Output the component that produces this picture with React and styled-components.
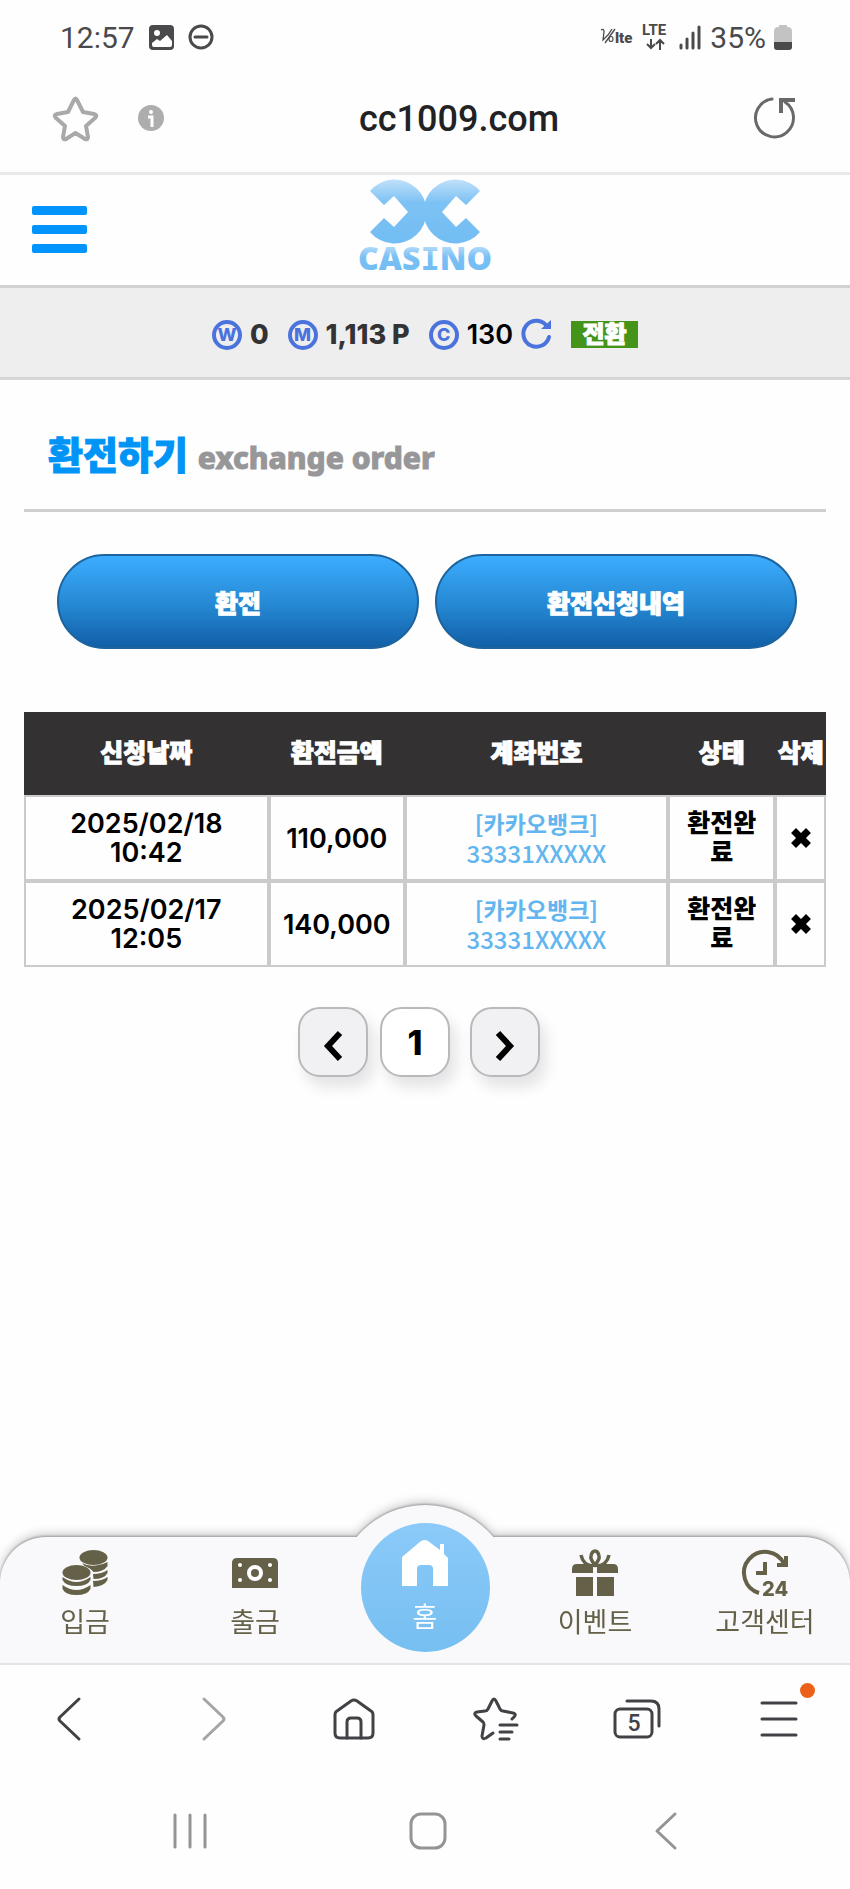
import React from "react";
import styled, { createGlobalStyle, css } from "styled-components";

const GlobalStyle = createGlobalStyle`
    * {
        box-sizing: border-box;
    }

    body {
        margin: 0;
        background: #fefefe;
        color: #000;
        font-family: Inter, "Noto Sans CJK KR", sans-serif;
    }

    button {
        padding: 0;
        border: 0;
        background: none;
        font: inherit;
        color: inherit;
        cursor: pointer;
    }

    a {
        color: inherit;
        text-decoration: none;
    }

    svg {
        display: block;
        flex: none;
        overflow: visible;
    }
`;

const Screen = styled.div`
    min-height: 100vh;
    display: flex;
    flex-direction: column;
`;

const StatusBar = styled.div`
    height: 74px;
    padding: 0 58px 0 60px;
    display: flex;
    align-items: center;
    justify-content: space-between;
    font-family: Roboto, sans-serif;
    font-size: 30px;
    color: #4a4a4c;
`;

const StatusGroup = styled.div`
    display: flex;
    align-items: center;
    gap: ${({ gap }) => gap}px;
`;

const AddressBar = styled.div`
    height: 101px;
    padding: 0 54px 10px 53px;
    display: flex;
    align-items: center;
    border-bottom: 3px solid #e9e9ea;
`;

const InfoButton = styled.button`
    margin-left: 40px;
`;

const Address = styled.div`
    flex: 1;
    padding-top: 2px;
    text-align: center;
    font-family: Roboto, sans-serif;
    font-weight: 500;
    font-size: 36px;
    color: #222224;
`;

const Header = styled.header`
    height: 110px;
    padding: 0 32px 2px;
    display: grid;
    grid-template-columns: 1fr auto 1fr;
    align-items: center;
`;

const LogoLink = styled.a`
    align-self: start;
`;

const MenuButton = styled.button`
    width: 55px;
    display: grid;
    gap: 10px;
`;

const MenuLine = styled.span`
    height: 9px;
    border-radius: 2px;
    background: #0094fc;
`;

const WalletBar = styled.div`
    height: 95px;
    padding-top: 4px;
    display: flex;
    align-items: center;
    justify-content: center;
    gap: 19px;
    background: #eeeeef;
    border-top: 3px solid #d2d2d3;
    border-bottom: 3px solid #d6d6d7;
`;

const Wallet = styled.div`
    display: flex;
    align-items: center;
    gap: 8px;
    font-size: 27px;
    line-height: 30px;
    ${({ strong }) => css`
        font-weight: ${strong ? 800 : 600};
        color: ${strong ? "#333335" : "#000"};
    `}
`;

const Coin = styled.span`
    width: 30px;
    height: 30px;
    border: 4px solid #4b73dd;
    border-radius: 50%;
    display: grid;
    place-items: center;
    font-weight: 800;
    font-size: 18px;
    line-height: 22px;
    color: #4b73dd;
`;

const ConvertButton = styled.button`
    width: 67px;
    height: 27px;
    background: #44941a;
    color: #fff;
    font-weight: 900;
    font-size: 24px;
    line-height: 27px;
    -webkit-text-stroke: 1px #fff;
`;

const Main = styled.main`
    flex: 1;
    padding: 51px 24px 40px;
`;

const Title = styled.h1`
    margin: 0 0 42px;
    padding: 0 24px 27px;
    display: flex;
    align-items: baseline;
    gap: 10px;
    border-bottom: 3px solid #cfcfd1;
    line-height: 48px;
    font-weight: 900;
    font-size: 38px;
    color: #0094f6;
    -webkit-text-stroke: 1px currentColor;
`;

const Subtitle = styled.small`
    font-family: "Noto Sans", sans-serif;
    font-weight: 800;
    font-size: 30px;
    color: #979799;
`;

const Actions = styled.div`
    padding: 0 29px 0 33px;
    display: grid;
    grid-template-columns: 1fr 1fr;
    gap: 16px;
`;

const ActionButton = styled.button`
    height: 95px;
    border: 2px solid #1d639d;
    border-radius: 48px;
    background: linear-gradient(#3cadff, #2587d2 55%, #115fa7);
    color: #fff;
    font-weight: 900;
    font-size: 25px;
    -webkit-text-stroke: 1px #fff;
`;

const Table = styled.table`
    width: 100%;
    margin: 63px 0 40px;
    table-layout: fixed;
    border-collapse: separate;
    border-spacing: 0;
    text-align: center;
    font-size: 27px;
    line-height: 29px;
    font-weight: 600;
`;

const Col = styled.col`
    width: ${({ share }) => share}%;
`;

const HeadCell = styled.th`
    height: 83px;
    padding: 0;
    background: #343133;
    color: #fff;
    font-weight: 900;
    font-size: 25px;
    white-space: nowrap;
    -webkit-text-stroke: 1px #fff;
`;

const Cell = styled.td`
    height: 86px;
    padding: 0 4px;
    border: 2px solid #cccacd;
`;

const DateCell = styled(Cell)`
    padding: 0 40px;
`;

const StatusCell = styled(Cell)`
    padding: 0 16px;
    font-weight: 900;
    font-size: 25px;
    word-break: break-all;
`;

const Account = styled.div`
    font-family: "Noto Sans CJK KR", sans-serif;
    font-size: 24px;
    line-height: 29px;
    font-weight: 500;
    color: #62b5ee;
`;

const Bank = styled.div`
    font-size: 23px;
    font-weight: 700;
`;

const DeleteButton = styled.button`
    display: block;
    margin: 0 auto;
`;

const Pagination = styled.nav`
    padding-right: 12px;
    display: flex;
    justify-content: center;
    gap: 12px;
`;

const PageButton = styled.button`
    width: 70px;
    height: 70px;
    border: 2px solid #b9b8ba;
    border-radius: 22px;
    display: grid;
    place-items: center;
    font-weight: 800;
    font-size: 34px;
    background: ${({ current }) => (current ? "#fff" : "#f1f0f2")};
    margin-right: ${({ current }) => (current ? 8 : 0)}px;
    box-shadow: 6px 10px 14px rgba(60, 50, 60, 0.13);
`;

const TabBar = styled.nav`
    position: relative;
    height: 126px;
    clip-path: inset(-60px 0 0 0);
`;

const TabShape = styled.div`
    position: absolute;
    inset: 0;
    border-radius: 46px 46px 0 0;
    background: #f9f8fa;
    filter: drop-shadow(0 -1px 1px rgba(0, 0, 0, 0.3)) drop-shadow(0 -3px 5px rgba(0, 0, 0, 0.2));

    &::before {
        content: "";
        position: absolute;
        top: -32px;
        left: calc(50% - 89px);
        width: 178px;
        height: 178px;
        border-radius: 50%;
        background: #f9f8fa;
    }
`;

const Tabs = styled.div`
    position: relative;
    display: grid;
    grid-template-columns: repeat(5, 1fr);
    align-items: start;
`;

const Tab = styled.a`
    padding-top: 13px;
    display: flex;
    flex-direction: column;
    align-items: center;
    gap: 10px;
    font-family: "Noto Sans CJK KR", sans-serif;
    font-size: 27px;
    line-height: 30px;
    color: #656149;
`;

const HomeTab = styled(Tab)`
    width: 129px;
    height: 129px;
    margin: -14px auto 0;
    padding-top: 17px;
    gap: 15px;
    border-radius: 50%;
    background: linear-gradient(#8bcaf9, #76bff1);
    color: #fff;
`;

const BrowserBar = styled.div`
    height: 110px;
    border-top: 2px solid #e4e3e6;
    display: grid;
    grid-template-columns: repeat(6, 1fr);
    justify-items: center;
    align-items: center;
    color: #434145;
`;

const BrowserButton = styled.button`
    position: relative;
    color: ${({ dimmed }) => (dimmed ? "#a5a4a6" : "inherit")};
`;

const Dot = styled.span`
    position: absolute;
    top: -18px;
    right: -17px;
    width: 15px;
    height: 15px;
    border-radius: 50%;
    background: #ec6119;
`;

const SystemBar = styled.div`
    height: 116px;
    padding: 0 65px 0 71px;
    display: grid;
    grid-template-columns: repeat(3, 1fr);
    justify-items: center;
    align-items: center;
    color: #959396;
`;

const orders = [
    { date: "2025/02/18", time: "10:42", amount: "110,000", bank: "[카카오뱅크]", account: "33331XXXXX", status: "환전완료" },
    { date: "2025/02/17", time: "12:05", amount: "140,000", bank: "[카카오뱅크]", account: "33331XXXXX", status: "환전완료" },
];

// line icons share the same stroke settings
const Line = ({ w, h, stroke = 3, children }) => (
    <svg
        width={w}
        height={h}
        viewBox={`0 0 ${w} ${h}`}
        fill="none"
        stroke="currentColor"
        strokeWidth={stroke}
        strokeLinecap="round"
        strokeLinejoin="round"
        aria-hidden="true"
    >
        {children}
    </svg>
);

const PictureIcon = () => (
    <svg width="25" height="25" viewBox="0 0 25 25" aria-hidden="true">
        <rect width="25" height="25" rx="4" fill="#4a4a4c" />
        <circle cx="8" cy="8" r="3" fill="#fff" />
        <path d="M3 18l5-4 3 2 7-6 5 6v4q0 2-2 2H5q-2 0-2-2z" fill="#fff" />
    </svg>
);

const VolteIcon = () => (
    <svg width="34" height="20" viewBox="0 0 34 20" fill="#4a4a4c" aria-hidden="true">
        <path d="M1 3q3-2 3 2l-1 8Q9 8 12 2M15 2L5 16" fill="none" stroke="#4a4a4c" strokeWidth="1.3" />
        <ellipse cx="11" cy="12" rx="2" ry="2.500" fill="none" stroke="#4a4a4c" strokeWidth="1.200" />
        <text x="15" y="16" fontFamily="Roboto" fontWeight="900" fontSize="15">lte</text>
    </svg>
);

const LteIcon = () => (
    <svg width="28" height="30" viewBox="0 -2 28 30" fill="#4a4a4c" aria-hidden="true">
        <text x="0" y="11" fontFamily="Roboto" fontWeight="700" fontSize="15">LTE</text>
        <path
            d="M9 15v9M5 20l4 4 4-4M18 26v-9M14 20l4-4 4 4"
            fill="none"
            stroke="#4a4a4c"
            strokeWidth="2"
        />
    </svg>
);

const SignalIcon = () => (
    <Line w={24} h={25} stroke={3}>
        <path d="M3 20v3M9 14v9M15 8v15M21 2v21" />
    </Line>
);

const BatteryIcon = () => (
    <svg width="18" height="26" viewBox="0 0 18 26" aria-hidden="true">
        <path d="M5 1h8v2h2q3 1 3 4v11H0V7q0-3 3-4h2z" fill="#c3c3c4" />
        <path d="M0 18h18v5q0 3-3 3H3q-3 0-3-3z" fill="#4a4a4c" />
    </svg>
);

const Logo = () => (
    <svg width="140" height="100" viewBox="-3 -2 140 100" role="img" aria-label="CC CASINO">
        <defs>
            <linearGradient id="mark" x1="0" y1="3" x2="0" y2="67" gradientUnits="userSpaceOnUse">
                <stop offset="0" stopColor="#bfe0fa" />
                <stop offset="0.350" stopColor="#7dc2f4" />
                <stop offset="1" stopColor="#72bdf3" />
            </linearGradient>
            <linearGradient id="word" x1="0" y1="69" x2="0" y2="94" gradientUnits="userSpaceOnUse">
                <stop offset="0" stopColor="#b5dbf9" />
                <stop offset="0.450" stopColor="#79c0f4" />
                <stop offset="1" stopColor="#72bdf3" />
            </linearGradient>
        </defs>
        <path d="M12 14L26 28l10-9 14 16-14 15-10-9-14 14A32 32 0 1 0 12 14z" fill="url(#mark)" />
        <path d="M122 14L108 28l-10-9-14 16 14 15 10-9 14 14A32 32 0 1 1 122 14z" fill="url(#mark)" />
        <text x="67" y="93" textAnchor="middle" fontFamily="Noto Sans" fontWeight="900" fontSize="32" fill="url(#word)">
            CAS<tspan fontFamily="DejaVu Sans Mono">I</tspan>NO
        </text>
    </svg>
);

const CoinsIcon = () => (
    <svg width="46" height="46" viewBox="0 0 46 46" fill="currentColor" aria-hidden="true">
        <ellipse cx="31.500" cy="7.500" rx="14" ry="7.500" />
        <path d="M20 13q10 6 25.500-1v4q-4 6-14 6-3-4-9-6zM31 24q9 0 14.500-4v3q-3 6-14 6zM31 31q9 0 14.500-4v3q-3 6-14 7z" />
        <ellipse cx="14.500" cy="22.500" rx="14" ry="7.500" />
        <path d="M.5 27q14 10 28 0v3q-3 6-14 6T.5 30zM.5 35q14 10 28 0v4q-3 6-14 6T.5 39z" />
    </svg>
);

const BillIcon = () => (
    <svg width="46" height="46" viewBox="0 0 46 46" aria-hidden="true">
        <path d="M0 38V13q0-5 5-5h36q5 0 5 5v25z" fill="currentColor" />
        <circle cx="23" cy="23" r="6" fill="none" stroke="#fff" strokeWidth="4" />
        <g fill="#fff">
            <circle cx="8" cy="15" r="2" />
            <circle cx="38" cy="15" r="2" />
            <circle cx="8" cy="30" r="2" />
            <circle cx="38" cy="30" r="2" />
        </g>
    </svg>
);

const HouseIcon = () => (
    <svg width="46" height="46" viewBox="0 0 46 46" fill="currentColor" aria-hidden="true">
        <path d="M0 46V17L19 1q4-2 7 0l12 9V4h4v10l4 4v28H31V29q0-4-4-4h-8q-4 0-4 4v17z" />
    </svg>
);

const GiftIcon = () => (
    <svg width="46" height="46" viewBox="0 0 46 46" fill="currentColor" aria-hidden="true">
        <path d="M0 23v-4q0-5 5-5h36q5 0 5 5v4H25v-6h-4v6zM4 27h17v19H4zM25 27h17v19H25z" />
        <g fill="none" stroke="currentColor" strokeWidth="3.500">
            <path d="M23 15q-5-6-4-9 1-5 4-5t4 5q1 3-4 9zM9 5q2 10 12 11M37 5q-2 10-12 11" />
        </g>
    </svg>
);

const SupportIcon = () => (
    <svg width="46" height="46" viewBox="0 0 46 46" aria-hidden="true">
        <g fill="none" stroke="currentColor" strokeWidth="4">
            <path d="M17 43A21 21 0 1 1 42 14" />
            <path d="M44 6v9h-9" />
            <path d="M23 12v11h-9" />
        </g>
        <text x="20" y="46" fontFamily="Inter" fontWeight="800" fontSize="20" fill="currentColor">24</text>
    </svg>
);

const App = () => {
    return (
        <Screen>
            <GlobalStyle />
            <StatusBar>
                <StatusGroup gap={14}>
                    <span>12:57</span>
                    <PictureIcon />
                    <Line w={26} h={26}>
                        <circle cx="13" cy="13" r="11" />
                        <path d="M7 13h12" />
                    </Line>
                </StatusGroup>
                <StatusGroup gap={8}>
                    <VolteIcon />
                    <LteIcon />
                    <SignalIcon />
                    <span>35%</span>
                    <BatteryIcon />
                </StatusGroup>
            </StatusBar>

            <AddressBar>
                <button type="button" aria-label="Bookmark">
                    <svg width="45" height="45" viewBox="0 0 45 45" fill="none" stroke="#a9a9aa" strokeWidth="4" strokeLinejoin="round">
                        <path d="M21 4q1.500-3 3 0l6 12 11 2q4 1 1 4l-9 8 2 11q0 3-3 2l-9.500-6L13 43q-3 1-3-2l2-11-9-8q-3-3 1-4l11-2z" />
                    </svg>
                </button>
                <InfoButton type="button" aria-label="Site information">
                    <svg width="26" height="26" viewBox="0 0 26 26">
                        <circle cx="13" cy="13" r="13" fill="#adadae" />
                        <circle cx="13" cy="7" r="2" fill="#fff" />
                        <path d="M10 12h4v10" fill="none" stroke="#fff" strokeWidth="3" />
                    </svg>
                </InfoButton>
                <Address>cc1009.com</Address>
                <button type="button" aria-label="Reload">
                    <svg width="42" height="42" viewBox="0 0 42 42" fill="none" stroke="#69696b" strokeWidth="3">
                        <path d="M18 2A19 19 0 1 0 31 5" strokeLinecap="round" />
                        <path d="M27 16V3h14" strokeWidth="4" />
                    </svg>
                </button>
            </AddressBar>

            <Header>
                <MenuButton type="button" aria-label="메뉴">
                    <MenuLine />
                    <MenuLine />
                    <MenuLine />
                </MenuButton>
                <LogoLink href="#home"><Logo /></LogoLink>
            </Header>

            <WalletBar>
                <Wallet strong><Coin>W</Coin>0</Wallet>
                <Wallet strong><Coin>M</Coin>1,113 P</Wallet>
                <Wallet>
                    <Coin>C</Coin>130
                    <button type="button" aria-label="새로고침">
                        <svg width="31" height="31" viewBox="0 0 31 31" fill="none" stroke="#4b73dd" strokeWidth="4">
                            <path d="M28 18A13 13 0 1 1 25 6" strokeLinecap="round" />
                            <path d="M20 10h10V1z" fill="#4b73dd" stroke="none" />
                        </svg>
                    </button>
                </Wallet>
                <ConvertButton type="button">전환</ConvertButton>
            </WalletBar>

            <Main>
                <Title>
                    환전하기
                    <Subtitle>exchange order</Subtitle>
                </Title>

                <Actions>
                    <ActionButton type="button">환전</ActionButton>
                    <ActionButton type="button">환전신청내역</ActionButton>
                </Actions>

                <Table>
                    <colgroup>
                        <Col share={30.5} />
                        <Col share={17} />
                        <Col share={32.8} />
                        <Col share={13.4} />
                        <Col share={6.3} />
                    </colgroup>
                    <thead>
                        <tr>
                            <HeadCell>신청날짜</HeadCell>
                            <HeadCell>환전금액</HeadCell>
                            <HeadCell>계좌번호</HeadCell>
                            <HeadCell>상태</HeadCell>
                            <HeadCell>삭제</HeadCell>
                        </tr>
                    </thead>
                    <tbody>
                        {orders.map((order) => (
                            <tr key={order.date}>
                                <DateCell>{order.date} {order.time}</DateCell>
                                <Cell>{order.amount}</Cell>
                                <Cell>
                                    <Account>
                                        <Bank>{order.bank}</Bank>
                                        {order.account}
                                    </Account>
                                </Cell>
                                <StatusCell>{order.status}</StatusCell>
                                <Cell>
                                    <DeleteButton type="button" aria-label="삭제">
                                        <Line w={20} h={20} stroke={7}>
                                            <path d="M5 5l10 10M15 5L5 15" strokeLinecap="square" />
                                        </Line>
                                    </DeleteButton>
                                </Cell>
                            </tr>
                        ))}
                    </tbody>
                </Table>

                <Pagination aria-label="페이지">
                    <PageButton type="button" aria-label="이전">
                        <svg width="20" height="38" viewBox="0 0 20 38" fill="none" stroke="#000" strokeWidth="6">
                            <path d="M17 10L5 23l12 13" />
                        </svg>
                    </PageButton>
                    <PageButton type="button" current>1</PageButton>
                    <PageButton type="button" aria-label="다음">
                        <svg width="20" height="38" viewBox="0 0 20 38" fill="none" stroke="#000" strokeWidth="6">
                            <path d="M3 10l12 13L3 36" />
                        </svg>
                    </PageButton>
                </Pagination>
            </Main>

            <TabBar>
                <TabShape />
                <Tabs>
                    <Tab href="#deposit"><CoinsIcon />입금</Tab>
                    <Tab href="#withdraw"><BillIcon />출금</Tab>
                    <HomeTab href="#home"><HouseIcon />홈</HomeTab>
                    <Tab href="#event"><GiftIcon />이벤트</Tab>
                    <Tab href="#support"><SupportIcon />고객센터</Tab>
                </Tabs>
            </TabBar>

            <BrowserBar>
                <BrowserButton type="button" aria-label="Back">
                    <Line w={28} h={44}><path d="M22 2L3 20q-2 2 0 4l19 18" /></Line>
                </BrowserButton>
                <BrowserButton type="button" aria-label="Forward" dimmed>
                    <Line w={24} h={44}><path d="M4 2l19 18q2 2 0 4L4 42" /></Line>
                </BrowserButton>
                <BrowserButton type="button" aria-label="Home page">
                    <Line w={42} h={42}>
                        <path d="M2 17q0-3 2-4L18 3q3-2 6 0l14 10q2 1 2 4v18q0 5-5 5H7q-5 0-5-5z" />
                        <path d="M14 40V24q0-4 4-4h6q4 0 4 4v16" />
                    </Line>
                </BrowserButton>
                <BrowserButton type="button" aria-label="Bookmarks">
                    <Line w={46} h={44}>
                        <path d="M20 36l-7 5q-4 2-4-2l2-11q0-2-1-3l-7-6q-3-3 1-4l8-1q2 0 3-2l4-8q2-4 4 0l4 8q1 2 3 2l10 2q4 1 1 4l-2 2" />
                        <path d="M27 28h17M27 35h12M27 42h9" />
                    </Line>
                </BrowserButton>
                <BrowserButton type="button" aria-label="Tabs">
                    <Line w={48} h={40}>
                        <rect x="2" y="10" width="37" height="28" rx="5" />
                        <path d="M14 2h24q8 0 8 8v17" />
                        <text x="21" y="32" textAnchor="middle" fontFamily="Roboto" fontWeight="500" fontSize="23" stroke="none" fill="currentColor">5</text>
                    </Line>
                </BrowserButton>
                <BrowserButton type="button" aria-label="Browser menu">
                    <Line w={38} h={36}><path d="M2 2h34M2 18h34M2 34h34" /></Line>
                    <Dot />
                </BrowserButton>
            </BrowserBar>

            <SystemBar>
                <button type="button" aria-label="Recent apps">
                    <Line w={34} h={36}><path d="M2 2v32M17 2v32M32 2v32" /></Line>
                </button>
                <button type="button" aria-label="Home">
                    <Line w={38} h={38}><rect x="2" y="2" width="34" height="34" rx="10" /></Line>
                </button>
                <button type="button" aria-label="Back">
                    <Line w={22} h={38}><path d="M20 2L2 19l18 17" /></Line>
                </button>
            </SystemBar>
        </Screen>
    );
};

export default App;
